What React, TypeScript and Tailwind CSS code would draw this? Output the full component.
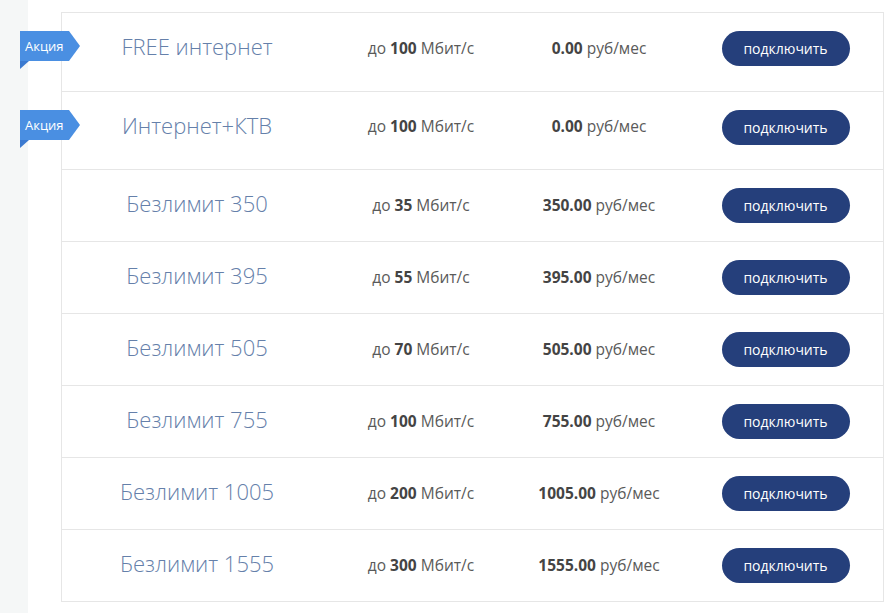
import React from "react"

interface Plan {
  name: string
  speed: string
  price: string
  promo?: boolean
}

const plans: Plan[] = [
  { name: "FREE интернет", speed: "100", price: "0.00", promo: true },
  { name: "Интернет+КТВ", speed: "100", price: "0.00", promo: true },
  { name: "Безлимит 350", speed: "35", price: "350.00" },
  { name: "Безлимит 395", speed: "55", price: "395.00" },
  { name: "Безлимит 505", speed: "70", price: "505.00" },
  { name: "Безлимит 755", speed: "100", price: "755.00" },
  { name: "Безлимит 1005", speed: "200", price: "1005.00" },
  { name: "Безлимит 1555", speed: "300", price: "1555.00" },
]

function PromoBadge() {
  return (
    <div className="absolute left-[-42px] top-[18px] flex flex-col">
      <div className="flex">
        <div className="h-[30px] w-[49px] bg-[#4a8fe2] text-white text-[13px] leading-[30px] pl-[5px]">Акция</div>
        <div className="h-0 w-0 border-y-[15px] border-y-transparent border-l-[11px] border-l-[#4a8fe2]" />
      </div>
      <div className="h-0 w-0 border-t-[8px] border-t-[#3b7ad0] border-r-[9px] border-r-transparent" />
    </div>
  )
}

export default function App() {
  return (
    <div
      className="flex min-h-[613px] w-[895px] bg-white"
      style={{ fontFamily: '"Open Sans", "Noto Sans", sans-serif' }}
    >
      <div className="w-[28px] shrink-0 bg-[#f5f7f7]" />
      <div className="pl-[33px] pt-[12px]">
        <div className="w-[823px] border border-[#e6e6e6]">
          {plans.map((plan, i) => (
            <div
              key={plan.name}
              className={`relative flex items-center ${i > 0 ? "border-t border-[#e6e6e6]" : ""} ${
                plan.promo ? "h-[78px] pb-[7px]" : "h-[72px]"
              }`}
            >
              {plan.promo && <PromoBadge />}
              <div className="mb-[4px] w-[270px] text-center text-[22px] font-light text-[#6580aa]">{plan.name}</div>
              <div className="w-[178px] text-center text-[15.5px] text-[#5a5a5a]">
                до <b className="font-bold text-[#444]">{plan.speed}</b> Мбит/с
              </div>
              <div className="w-[178px] text-center text-[15.5px] text-[#5a5a5a]">
                <b className="font-bold text-[#444]">{plan.price}</b> руб/мес
              </div>
              <div className="flex flex-1 justify-center">
                <button className="h-[35px] w-[128px] rounded-full bg-[#253f7b] text-[14px] text-white">
                  подключить
                </button>
              </div>
            </div>
          ))}
        </div>
      </div>
    </div>
  )
}
